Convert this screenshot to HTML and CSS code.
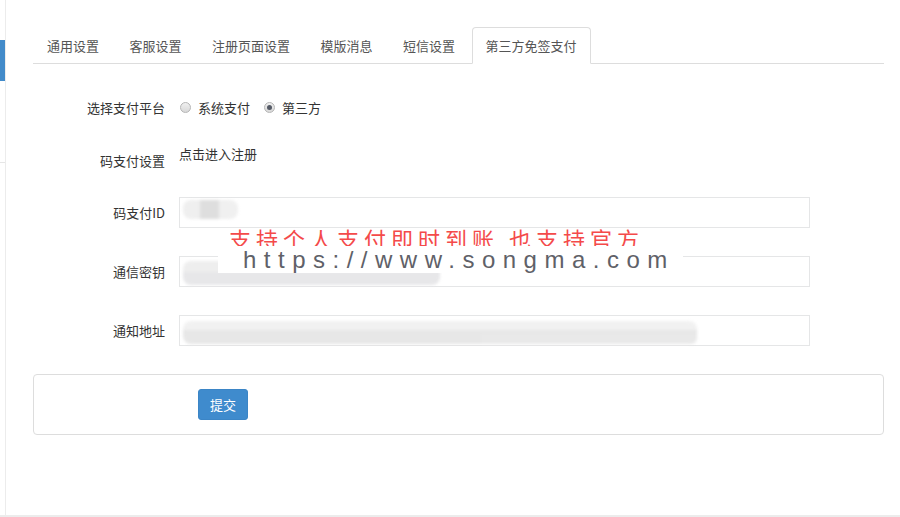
FILE: index.html
```html
<!DOCTYPE html>
<html lang="zh-CN">
<head>
<meta charset="utf-8">
<title>第三方免签支付</title>
<link rel="stylesheet" href="styles.css">
</head>
<body>
<div class="page">
  <aside class="side">
    <div class="side-mark"></div>
    <div class="side-sep"></div>
  </aside>
  <main class="main">
    <ul class="tabs">
      <li class="tab">通用设置</li>
      <li class="tab">客服设置</li>
      <li class="tab">注册页面设置</li>
      <li class="tab">模版消息</li>
      <li class="tab">短信设置</li>
      <li class="tab active">第三方免签支付</li>
    </ul>
    <form class="form">
      <div class="row row-radio">
        <label class="lbl">选择支付平台</label>
        <div class="radios">
          <span class="radio"></span><span class="radio-text">系统支付</span>
          <span class="radio checked"></span><span class="radio-text">第三方</span>
        </div>
      </div>
      <div class="row row-link">
        <label class="lbl">码支付设置</label>
        <a class="link">点击进入注册</a>
      </div>
      <div class="row">
        <label class="lbl">码支付ID</label>
        <div class="input"><span class="blob blob-id"></span></div>
      </div>
      <div class="row">
        <label class="lbl">通信密钥</label>
        <div class="input"><span class="blob blob-key"></span></div>
      </div>
      <div class="row row-last">
        <label class="lbl">通知地址</label>
        <div class="input"><span class="blob blob-url"></span></div>
      </div>
    </form>
    <div class="panel">
      <button class="btn" type="button">提交</button>
    </div>
    <div class="wm-red">支持个人支付即时到账 也支持官方</div>
    <div class="wm-url">https://www.songma.com</div>
  </main>
</div>
</body>
</html>
```
FILE: styles.css
```css
* { box-sizing: border-box; }
html, body { margin: 0; padding: 0; background: #fff; }
body {
  font-family: "Noto Sans CJK SC", "Noto Sans", sans-serif;
  font-size: 13px;
  color: #333;
}
.page {
  display: flex;
  height: 517px;
  border-bottom: 2px solid #ececec;
}
.side {
  width: 6px;
  border-right: 1px solid #ececec;
  display: flex;
  flex-direction: column;
}
.side-mark {
  margin-top: 40px;
  height: 41px;
  width: 5px;
  background: #428bca;
}
.side-sep {
  margin-top: 81px;
  height: 1px;
  background: #e6e6e6;
}
.main {
  flex: 1;
  position: relative;
  padding: 27px 16px 0 27px;
}
.tabs {
  list-style: none;
  margin: 0;
  padding: 0;
  display: flex;
  border-bottom: 1px solid #ddd;
}
.tab {
  border: 1px solid transparent;
  border-radius: 4px 4px 0 0;
  padding: 9px 13px;
  margin-right: 2.5px;
  margin-bottom: -1px;
  line-height: 17px;
  color: #555;
}
.tab.active {
  border-color: #ddd;
  border-bottom-color: #fff;
  background: #fff;
}
.form {
  padding-top: 28px;
}
.row {
  display: flex;
  align-items: center;
  height: 31px;
  margin-bottom: 28px;
}
.row-radio { margin-bottom: 22px; }
.row-link { margin-bottom: 21px; }
.row-last { margin-bottom: 28px; }
.lbl {
  width: 132px;
  text-align: right;
  margin-right: 14px;
  line-height: 17px;
  color: #333;
}
.radios {
  display: flex;
  align-items: center;
  line-height: 17px;
}
.radio {
  width: 11px;
  height: 11px;
  border-radius: 50%;
  border: 1px solid #b5b5b5;
  background: linear-gradient(#f0f0f0, #d8d8d8);
  margin: 0 7px 0 1px;
  display: flex;
  align-items: center;
  justify-content: center;
}
.radio.checked::after {
  content: "";
  width: 5px;
  height: 5px;
  border-radius: 50%;
  background: #555a66;
}
.radio-text {
  margin-right: 13px;
  color: #333;
}
.link {
  align-self: flex-start;
  line-height: 17px;
  color: #333;
  text-decoration: none;
}
.input {
  width: 631px;
  height: 31px;
  border: 1px solid #e5e6e7;
  display: flex;
  align-items: flex-start;
  padding: 2px 3px;
}
.blob {
  display: block;
  filter: blur(1.6px);
  border-radius: 8px;
}
.blob-id {
  width: 55px;
  height: 19px;
  background: linear-gradient(90deg, #efefef 0 30%, #dedede 30% 65%, #f0f0f0 65%);
}
.blob-key {
  margin-top: 2px;
  width: 257px;
  height: 24px;
  background: linear-gradient(#eeeeee 0 45%, #e7e7e9 45%);
}
.blob-url {
  margin-top: 3px;
  width: 514px;
  height: 23px;
  border-radius: 8px 8px 6px 8px;
  background:
    linear-gradient(90deg, transparent 0 58%, #e9e9e9 58%) bottom / 100% 45% no-repeat,
    linear-gradient(#f1f1f1 0 40%, #e7e7e7 40%);
}
.panel {
  border: 1px solid #ddd;
  border-radius: 4px;
  height: 61px;
  padding: 14px 0 0 164px;
}
.btn {
  width: 50px;
  height: 31px;
  border: 1px solid #3b85c6;
  border-radius: 3px;
  background: #3f8bcd;
  color: #fff;
  font-family: "Noto Sans CJK SC", sans-serif;
  font-size: 13px;
  padding: 0;
}
.wm-red {
  position: absolute;
  left: 223px;
  top: 227px;
  font-size: 22px;
  line-height: 22px;
  letter-spacing: 5px;
  color: #f44a4a;
  white-space: pre;
}
.wm-url {
  position: absolute;
  left: 212px;
  top: 246px;
  width: 465px;
  height: 27px;
  background: #fff;
  padding-left: 25px;
  font-family: "Liberation Sans", sans-serif;
  font-size: 24px;
  line-height: 27px;
  letter-spacing: 7.5px;
  color: #606168;
  white-space: nowrap;
}
```
